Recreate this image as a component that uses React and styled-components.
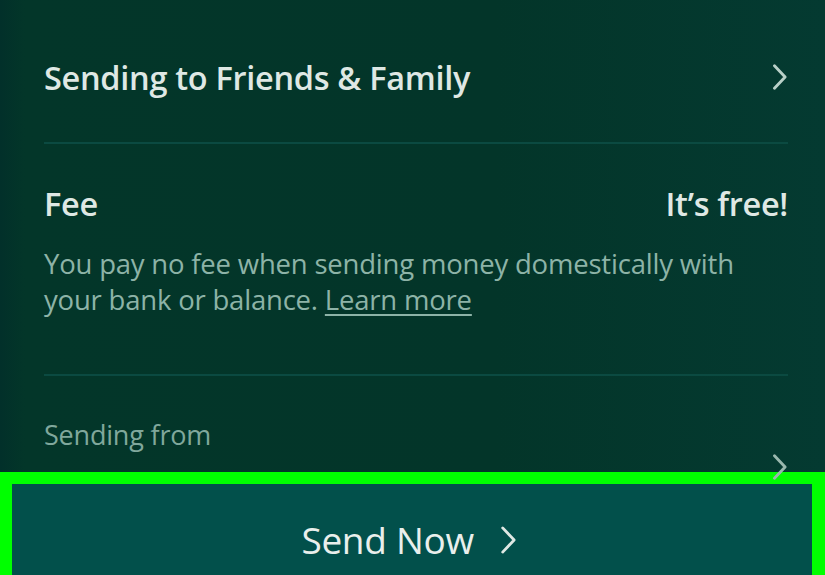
import React from "react";
import styled, { createGlobalStyle } from "styled-components";

const Global = createGlobalStyle`
  html, body { margin: 0; padding: 0; background: #03352b; }
  body { font-family: "Open Sans", "Noto Sans", sans-serif; overflow: hidden; }
`;

const Screen = styled.div`
  width: 825px;
  height: 575px;
  background: linear-gradient(90deg, #02302a 0%, #033629 3%, #033529 60%, #043a31 100%);
  display: flex;
  flex-direction: column;
  overflow: hidden;
`;

const Content = styled.div`
  flex: 1;
  padding: 0 37px 0 44px;
  display: flex;
  flex-direction: column;
  min-height: 0;
`;

const NavRow = styled.div`
  height: 142px;
  display: flex;
  align-items: center;
  justify-content: space-between;
  padding-top: 12px;
  box-sizing: border-box;
`;

const Title = styled.span`
  font-size: 32.5px;
  font-weight: 600;
  color: #dfe8e4;
  letter-spacing: -0.3px;
  line-height: 1.2;
`;

const Divider = styled.div`
  height: 2px;
  background: #0b4a41;
`;

const FeeBlock = styled.div`
  height: 230px;
  padding-top: 40px;
  box-sizing: border-box;
`;

const FeeHead = styled.div`
  display: flex;
  justify-content: space-between;
  align-items: baseline;
  margin-bottom: 23px;
`;

const Desc = styled.p`
  margin: 0;
  font-size: 27.5px;
  line-height: 36px;
  color: #8db3a7;
  letter-spacing: -0.2px;
`;

const LearnMore = styled.a`
  color: #8db3a7;
  text-decoration: underline;
  text-underline-offset: 4px;
  text-decoration-thickness: 2px;
`;

const FromRow = styled.div`
  position: relative;
  flex: 1;
  padding-top: 40px;
  box-sizing: border-box;
`;

const FromLabel = styled.span`
  font-size: 27px;
  color: #80a89c;
  letter-spacing: -0.2px;
`;

const FromChevron = styled.span`
  position: absolute;
  right: 0;
  bottom: -8px;
  display: flex;
`;

const ButtonFrame = styled.div`
  height: 103px;
  border: 12px solid #00ff00;
  border-right-width: 13px;
  border-bottom: none;
  background: #02504b;
  display: flex;
  align-items: center;
  justify-content: center;
  gap: 26px;
  padding-top: 20px;
  padding-right: 6px;
  box-sizing: border-box;
`;

const ButtonLabel = styled.span`
  font-size: 37px;
  color: #e9efec;
  font-weight: 500;
  letter-spacing: -0.3px;
`;

const Chevron = ({ size = 22, color = "#b9d0c8", stroke = 2.4 }) => (
  <svg width={size * 0.6} height={size} viewBox="0 0 12 22" fill="none">
    <path d="M1.5 1.5 L10.5 11 L1.5 20.5" stroke={color} strokeWidth={stroke} strokeLinecap="round" strokeLinejoin="round" />
  </svg>
);

export default function App() {
  return (
    <>
      <Global />
      <Screen>
        <Content>
          <NavRow>
            <Title>Sending to Friends &amp; Family</Title>
            <Chevron size={26} />
          </NavRow>
          <Divider />
          <FeeBlock>
            <FeeHead>
              <Title>Fee</Title>
              <Title>It’s free!</Title>
            </FeeHead>
            <Desc>
              You pay no fee when sending money domestically with your bank or balance.{" "}
              <LearnMore>Learn more</LearnMore>
            </Desc>
          </FeeBlock>
          <Divider />
          <FromRow>
            <FromLabel>Sending from</FromLabel>
            <FromChevron>
              <Chevron size={26} color="#9ab8ae" />
            </FromChevron>
          </FromRow>
        </Content>
        <ButtonFrame>
          <ButtonLabel>Send Now</ButtonLabel>
          <Chevron size={28} color="#dfe8e4" stroke={2.2} />
        </ButtonFrame>
      </Screen>
    </>
  );
}
